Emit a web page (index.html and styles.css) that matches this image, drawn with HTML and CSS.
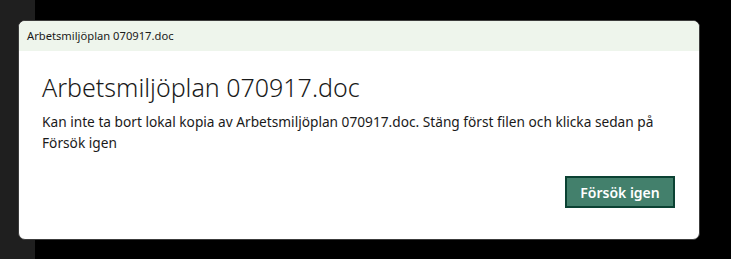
FILE: index.html
```html
<!DOCTYPE html>
<html lang="sv">
<head>
  <meta charset="UTF-8">
  <meta name="viewport" content="width=device-width, initial-scale=1">
  <title>Arbetsmiljöplan 070917.doc</title>
  <link rel="stylesheet" href="styles.css">
</head>
<body>
  <div class="dialog">
    <div class="titlebar">Arbetsmiljöplan 070917.doc</div>
    <div class="content">
      <h1>Arbetsmiljöplan 070917.doc</h1>
      <p>Kan inte ta bort lokal kopia av Arbetsmiljöplan 070917.doc. Stäng först filen och klicka sedan på Försök igen</p>
      <div class="actions">
        <button class="retry-btn">Försök igen</button>
      </div>
    </div>
  </div>
</body>
</html>
```

FILE: styles.css
```css
body {
  margin: 0;
  height: 259px;
  background: linear-gradient(to right, #1f1f1f 35px, #000 35px);
  font-family: 'Noto Sans', sans-serif;
  color: #1a1a1a;
  padding: 20px 0 0 18px;
  box-sizing: border-box;
}
.dialog {
  width: 682px;
  height: 220px;
  background-color: #fff;
  border: 1px solid #3c3c3c;
  border-radius: 7px;
  box-sizing: border-box;
  overflow: hidden;
  display: flex;
  flex-direction: column;
}
.titlebar {
  height: 30px;
  background-color: #eef5ec;
  padding-left: 8px;
  font-size: 11.2px;
  line-height: 30px;
}
.content {
  flex: 1;
  padding: 19px 24px 31px 23px;
  display: flex;
  flex-direction: column;
}
.content h1 {
  margin: 0;
  font-size: 25px;
  font-weight: 300;
  line-height: 34px;
}
.content p {
  margin: 7px 0 0;
  font-size: 13.7px;
  line-height: 21px;
  max-width: 625px;
}
.actions {
  margin-top: auto;
  display: flex;
  justify-content: flex-end;
}
.retry-btn {
  width: 110px;
  height: 32px;
  background-color: #43806c;
  border: 2px solid #0b4233;
  color: #fff;
  font-family: inherit;
  font-size: 14px;
  font-weight: 600;
  padding: 0;
  cursor: pointer;
}
```
